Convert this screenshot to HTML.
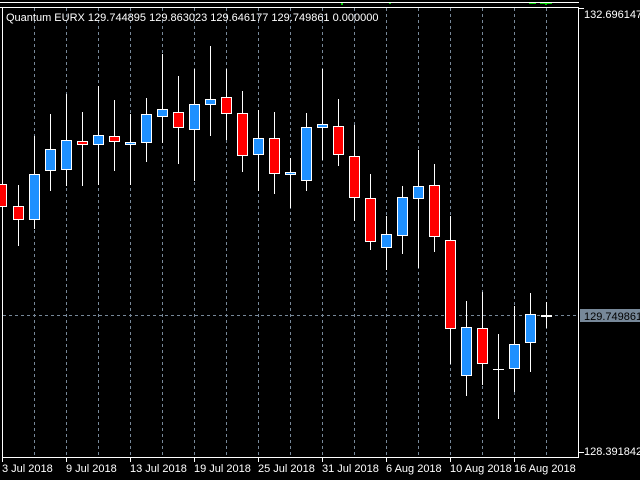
<!DOCTYPE html>
<html><head><style>
html,body{margin:0;padding:0;background:#000;width:640px;height:480px;overflow:hidden}
svg{display:block}
text{font-family:"Liberation Sans",sans-serif;font-size:11px;fill:#fff}
</style></head><body>
<svg width="640" height="480" xmlns="http://www.w3.org/2000/svg" shape-rendering="crispEdges">
<rect width="640" height="480" fill="#000"/>
<!-- top subwindow -->
<line x1="0" y1="2.5" x2="579" y2="2.5" stroke="#fff"/>
<line x1="0" y1="7.5" x2="579" y2="7.5" stroke="#fff"/>
<rect x="341" y="3" width="2" height="2" fill="#0c0"/>
<rect x="389" y="3" width="2" height="1" fill="#0c0"/>
<rect x="529" y="3" width="7" height="1" fill="#0c0"/>
<rect x="540" y="3" width="12" height="1" fill="#0c0"/>
<rect x="545" y="3" width="2" height="2" fill="#0c0"/>
<!-- frame -->
<line x1="2.5" y1="7" x2="2.5" y2="458" stroke="#fff"/>
<line x1="578.5" y1="7" x2="578.5" y2="458" stroke="#fff"/>
<line x1="2" y1="457.5" x2="579" y2="457.5" stroke="#fff"/>
<line x1="578" y1="8.5" x2="584" y2="8.5" stroke="#fff"/>
<line x1="578" y1="452.5" x2="584" y2="452.5" stroke="#fff"/>
<!-- grid -->
<g stroke="#778899" stroke-dasharray="3,3">
<line x1="34.5" y1="8" x2="34.5" y2="457"/><line x1="66.5" y1="8" x2="66.5" y2="457"/>
<line x1="98.5" y1="8" x2="98.5" y2="457"/><line x1="130.5" y1="8" x2="130.5" y2="457"/>
<line x1="162.5" y1="8" x2="162.5" y2="457"/><line x1="194.5" y1="8" x2="194.5" y2="457"/>
<line x1="226.5" y1="8" x2="226.5" y2="457"/><line x1="258.5" y1="8" x2="258.5" y2="457"/>
<line x1="290.5" y1="8" x2="290.5" y2="457"/><line x1="322.5" y1="8" x2="322.5" y2="457"/>
<line x1="354.5" y1="8" x2="354.5" y2="457"/><line x1="386.5" y1="8" x2="386.5" y2="457"/>
<line x1="418.5" y1="8" x2="418.5" y2="457"/><line x1="450.5" y1="8" x2="450.5" y2="457"/>
<line x1="482.5" y1="8" x2="482.5" y2="457"/><line x1="514.5" y1="8" x2="514.5" y2="457"/>
<line x1="546.5" y1="8" x2="546.5" y2="457"/>
<line x1="3" y1="315.5" x2="578" y2="315.5"/>
</g>
<!-- wicks -->
<g stroke="#fff">
<line x1="18.5" y1="185" x2="18.5" y2="246"/>
<line x1="34.5" y1="136" x2="34.5" y2="229"/>
<line x1="50.5" y1="114" x2="50.5" y2="191"/>
<line x1="66.5" y1="94" x2="66.5" y2="186"/>
<line x1="82.5" y1="112" x2="82.5" y2="186"/>
<line x1="98.5" y1="86" x2="98.5" y2="185"/>
<line x1="114.5" y1="100" x2="114.5" y2="171"/>
<line x1="130.5" y1="114" x2="130.5" y2="185"/>
<line x1="146.5" y1="98" x2="146.5" y2="162"/>
<line x1="162.5" y1="54" x2="162.5" y2="143"/>
<line x1="178.5" y1="76" x2="178.5" y2="164"/>
<line x1="194.5" y1="69" x2="194.5" y2="181"/>
<line x1="210.5" y1="46" x2="210.5" y2="136"/>
<line x1="226.5" y1="69" x2="226.5" y2="140"/>
<line x1="242.5" y1="91" x2="242.5" y2="172"/>
<line x1="258.5" y1="110" x2="258.5" y2="191"/>
<line x1="274.5" y1="112" x2="274.5" y2="194"/>
<line x1="290.5" y1="158" x2="290.5" y2="208"/>
<line x1="306.5" y1="113" x2="306.5" y2="191"/>
<line x1="322.5" y1="69" x2="322.5" y2="160"/>
<line x1="338.5" y1="99" x2="338.5" y2="166"/>
<line x1="354.5" y1="125" x2="354.5" y2="221"/>
<line x1="370.5" y1="174" x2="370.5" y2="250"/>
<line x1="386.5" y1="216" x2="386.5" y2="270"/>
<line x1="402.5" y1="186" x2="402.5" y2="254"/>
<line x1="418.5" y1="150" x2="418.5" y2="268"/>
<line x1="434.5" y1="164" x2="434.5" y2="252"/>
<line x1="450.5" y1="216" x2="450.5" y2="364"/>
<line x1="466.5" y1="301" x2="466.5" y2="396"/>
<line x1="482.5" y1="292" x2="482.5" y2="385"/>
<line x1="498.5" y1="334" x2="498.5" y2="419"/>
<line x1="514.5" y1="306" x2="514.5" y2="392"/>
<line x1="530.5" y1="293" x2="530.5" y2="372"/>
<line x1="546.5" y1="302" x2="546.5" y2="328"/>
<line x1="493" y1="369.5" x2="504" y2="369.5"/>
<line x1="541" y1="315.5" x2="552" y2="315.5"/>
<line x1="541" y1="316.5" x2="552" y2="316.5"/>
</g>
<!-- bodies -->
<g stroke="#fff">
<rect x="-3.5" y="184.5" width="10" height="22" fill="#f00"/>
<rect x="13.5" y="206.5" width="10" height="13" fill="#f00"/>
<rect x="29.5" y="174.5" width="10" height="45" fill="#1e90ff"/>
<rect x="45.5" y="149.5" width="10" height="21" fill="#1e90ff"/>
<rect x="61.5" y="140.5" width="10" height="29" fill="#1e90ff"/>
<rect x="77.5" y="141.5" width="10" height="3" fill="#f00"/>
<rect x="93.5" y="135.5" width="10" height="9" fill="#1e90ff"/>
<rect x="109.5" y="136.5" width="10" height="5" fill="#f00"/>
<rect x="125.5" y="142.5" width="10" height="2" fill="#1e90ff"/>
<rect x="141.5" y="114.5" width="10" height="28" fill="#1e90ff"/>
<rect x="157.5" y="109.5" width="10" height="7" fill="#1e90ff"/>
<rect x="173.5" y="112.5" width="10" height="15" fill="#f00"/>
<rect x="189.5" y="104.5" width="10" height="25" fill="#1e90ff"/>
<rect x="205.5" y="99.5" width="10" height="5" fill="#1e90ff"/>
<rect x="221.5" y="97.5" width="10" height="16" fill="#f00"/>
<rect x="237.5" y="113.5" width="10" height="42" fill="#f00"/>
<rect x="253.5" y="138.5" width="10" height="16" fill="#1e90ff"/>
<rect x="269.5" y="138.5" width="10" height="35" fill="#f00"/>
<rect x="285.5" y="172.5" width="10" height="2" fill="#1e90ff"/>
<rect x="301.5" y="127.5" width="10" height="53" fill="#1e90ff"/>
<rect x="317.5" y="124.5" width="10" height="3" fill="#1e90ff"/>
<rect x="333.5" y="126.5" width="10" height="28" fill="#f00"/>
<rect x="349.5" y="156.5" width="10" height="41" fill="#f00"/>
<rect x="365.5" y="198.5" width="10" height="43" fill="#f00"/>
<rect x="381.5" y="234.5" width="10" height="13" fill="#1e90ff"/>
<rect x="397.5" y="197.5" width="10" height="38" fill="#1e90ff"/>
<rect x="413.5" y="186.5" width="10" height="12" fill="#1e90ff"/>
<rect x="429.5" y="185.5" width="10" height="51" fill="#f00"/>
<rect x="445.5" y="240.5" width="10" height="88" fill="#f00"/>
<rect x="461.5" y="327.5" width="10" height="48" fill="#1e90ff"/>
<rect x="477.5" y="328.5" width="10" height="35" fill="#f00"/>
<rect x="509.5" y="344.5" width="10" height="24" fill="#1e90ff"/>
<rect x="525.5" y="314.5" width="10" height="28" fill="#1e90ff"/>
</g>
<!-- labels -->
<text x="6" y="21">Quantum EURX 129.744895 129.863023 129.646177 129.749861 0.000000</text>
<text x="584" y="18">132.696147</text>
<text x="584" y="455">128.391842</text>
<rect x="580" y="309" width="60" height="13" fill="#778899"/>
<text x="584" y="320" style="fill:#000">129.749861</text>
<g stroke="#fff">
<line x1="2.5" y1="457" x2="2.5" y2="462"/><line x1="66.5" y1="457" x2="66.5" y2="462"/>
<line x1="130.5" y1="457" x2="130.5" y2="462"/><line x1="194.5" y1="457" x2="194.5" y2="462"/>
<line x1="258.5" y1="457" x2="258.5" y2="462"/><line x1="322.5" y1="457" x2="322.5" y2="462"/>
<line x1="386.5" y1="457" x2="386.5" y2="462"/><line x1="450.5" y1="457" x2="450.5" y2="462"/>
<line x1="514.5" y1="457" x2="514.5" y2="462"/>
</g>
<text x="2" y="472">3 Jul 2018</text>
<text x="66" y="472">9 Jul 2018</text>
<text x="130" y="472">13 Jul 2018</text>
<text x="194" y="472">19 Jul 2018</text>
<text x="258" y="472">25 Jul 2018</text>
<text x="322" y="472">31 Jul 2018</text>
<text x="386" y="472">6 Aug 2018</text>
<text x="450" y="472">10 Aug 2018</text>
<text x="514" y="472">16 Aug 2018</text>
</svg>
</body></html>
